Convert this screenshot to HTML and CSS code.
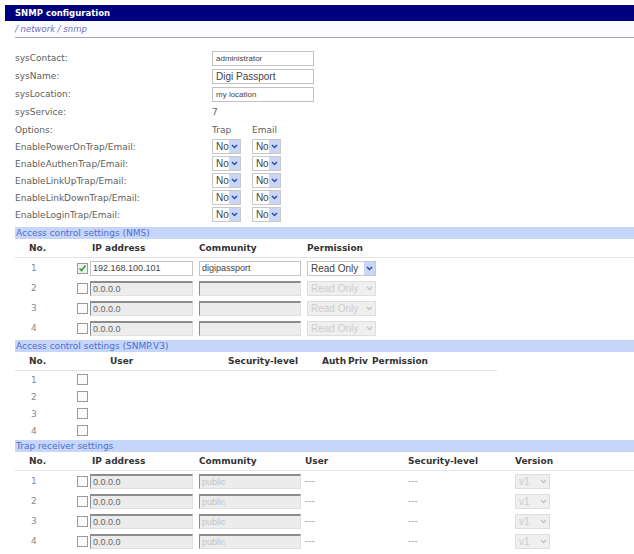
FILE: index.html
```html
<!DOCTYPE html>
<html lang="en">
<head>
  <meta charset="UTF-8" />
  <title>SNMP configuration</title>
  <link rel="stylesheet" href="styles.css">
</head>
<body>
  <div class="titlebar">SNMP configuration</div>
  <div class="crumb">/ network / snmp</div>

  <table class="sys">
    <tr><td class="lbl">sysContact:</td><td><input class="txt" type="text" value="administrator" /></td></tr>
    <tr><td class="lbl">sysName:</td><td><input class="txt big" type="text" value="Digi Passport" /></td></tr>
    <tr><td class="lbl">sysLocation:</td><td><input class="txt" type="text" value="my location" /></td></tr>
    <tr><td class="lbl">sysService:</td><td class="val">7</td></tr>
    <tr class="opt"><td class="lbl">Options:</td><td class="val"><span class="optcol">Trap</span><span class="optcol">Email</span></td></tr>
    <tr class="sw">
      <td class="lbl">EnablePowerOnTrap/Email:</td>
      <td>
        <span class="sel"><select><option>No</option></select><span class="arr"><svg width="7" height="5" viewBox="0 0 7 5"><path d="M1 1l2.5 2.5L6 1" fill="none" stroke="#2b4fb0" stroke-width="1.5"/></svg></span></span>
        <span class="sel"><select><option>No</option></select><span class="arr"><svg width="7" height="5" viewBox="0 0 7 5"><path d="M1 1l2.5 2.5L6 1" fill="none" stroke="#2b4fb0" stroke-width="1.5"/></svg></span></span>
      </td>
    </tr>
    <tr class="sw">
      <td class="lbl">EnableAuthenTrap/Email:</td>
      <td>
        <span class="sel"><select><option>No</option></select><span class="arr"><svg width="7" height="5" viewBox="0 0 7 5"><path d="M1 1l2.5 2.5L6 1" fill="none" stroke="#2b4fb0" stroke-width="1.5"/></svg></span></span>
        <span class="sel"><select><option>No</option></select><span class="arr"><svg width="7" height="5" viewBox="0 0 7 5"><path d="M1 1l2.5 2.5L6 1" fill="none" stroke="#2b4fb0" stroke-width="1.5"/></svg></span></span>
      </td>
    </tr>
    <tr class="sw">
      <td class="lbl">EnableLinkUpTrap/Email:</td>
      <td>
        <span class="sel"><select><option>No</option></select><span class="arr"><svg width="7" height="5" viewBox="0 0 7 5"><path d="M1 1l2.5 2.5L6 1" fill="none" stroke="#2b4fb0" stroke-width="1.5"/></svg></span></span>
        <span class="sel"><select><option>No</option></select><span class="arr"><svg width="7" height="5" viewBox="0 0 7 5"><path d="M1 1l2.5 2.5L6 1" fill="none" stroke="#2b4fb0" stroke-width="1.5"/></svg></span></span>
      </td>
    </tr>
    <tr class="sw">
      <td class="lbl">EnableLinkDownTrap/Email:</td>
      <td>
        <span class="sel"><select><option>No</option></select><span class="arr"><svg width="7" height="5" viewBox="0 0 7 5"><path d="M1 1l2.5 2.5L6 1" fill="none" stroke="#2b4fb0" stroke-width="1.5"/></svg></span></span>
        <span class="sel"><select><option>No</option></select><span class="arr"><svg width="7" height="5" viewBox="0 0 7 5"><path d="M1 1l2.5 2.5L6 1" fill="none" stroke="#2b4fb0" stroke-width="1.5"/></svg></span></span>
      </td>
    </tr>
    <tr class="sw">
      <td class="lbl">EnableLoginTrap/Email:</td>
      <td>
        <span class="sel"><select><option>No</option></select><span class="arr"><svg width="7" height="5" viewBox="0 0 7 5"><path d="M1 1l2.5 2.5L6 1" fill="none" stroke="#2b4fb0" stroke-width="1.5"/></svg></span></span>
        <span class="sel"><select><option>No</option></select><span class="arr"><svg width="7" height="5" viewBox="0 0 7 5"><path d="M1 1l2.5 2.5L6 1" fill="none" stroke="#2b4fb0" stroke-width="1.5"/></svg></span></span>
      </td>
    </tr>
  </table>

  <!-- v1/v2c managers -->
  <div class="section first">Access control settings (NMS)</div>
  <table class="grid nms">
    <colgroup><col class="c-no"><col class="c-cb"><col class="c-ip"><col class="c-com"><col></colgroup>
    <tr class="head"><th class="no">No.</th><th></th><th class="ip">IP address</th><th>Community</th><th>Permission</th></tr>
    <tr>
      <td class="no">1</td>
      <td><span class="cb on"><svg width="9" height="9" viewBox="0 0 9 9"><path d="M1.5 4.5l2 2 4-5" fill="none" stroke="#3c9a3c" stroke-width="1.6"/></svg></span></td>
      <td><input class="cell" type="text" value="192.168.100.101" /></td>
      <td><input class="cell com" type="text" value="digipassport" /></td>
      <td><span class="sel perm"><select><option>Read Only</option></select><span class="arr"><svg width="7" height="5" viewBox="0 0 7 5"><path d="M1 1l2.5 2.5L6 1" fill="none" stroke="#2b4fb0" stroke-width="1.5"/></svg></span></span></td>
    </tr>
    <tr>
      <td class="no">2</td>
      <td><span class="cb"></span></td>
      <td><input class="cell off" type="text" value="0.0.0.0" disabled /></td>
      <td><input class="cell com off" type="text" value="" disabled /></td>
      <td><span class="sel perm dis"><select disabled><option>Read Only</option></select><span class="arr"><svg width="7" height="5" viewBox="0 0 7 5"><path d="M1 1l2.5 2.5L6 1" fill="none" stroke="#c4c4c4" stroke-width="1.5"/></svg></span></span></td>
    </tr>
    <tr>
      <td class="no">3</td>
      <td><span class="cb"></span></td>
      <td><input class="cell off" type="text" value="0.0.0.0" disabled /></td>
      <td><input class="cell com off" type="text" value="" disabled /></td>
      <td><span class="sel perm dis"><select disabled><option>Read Only</option></select><span class="arr"><svg width="7" height="5" viewBox="0 0 7 5"><path d="M1 1l2.5 2.5L6 1" fill="none" stroke="#c4c4c4" stroke-width="1.5"/></svg></span></span></td>
    </tr>
    <tr>
      <td class="no">4</td>
      <td><span class="cb"></span></td>
      <td><input class="cell off" type="text" value="0.0.0.0" disabled /></td>
      <td><input class="cell com off" type="text" value="" disabled /></td>
      <td><span class="sel perm dis"><select disabled><option>Read Only</option></select><span class="arr"><svg width="7" height="5" viewBox="0 0 7 5"><path d="M1 1l2.5 2.5L6 1" fill="none" stroke="#c4c4c4" stroke-width="1.5"/></svg></span></span></td>
    </tr>
  </table>

  <!-- v3 users -->
  <div class="section">Access control settings (SNMP.V3)</div>
  <table class="grid v3">
    <colgroup><col class="c-no"><col class="c-cb"><col class="c-user"><col class="c-sec"><col class="c-auth"><col class="c-priv"><col></colgroup>
    <tr class="head"><th class="no">No.</th><th></th><th class="user">User</th><th>Security-level</th><th>Auth</th><th>Priv</th><th>Permission</th></tr>
    <tr><td class="no">1</td><td><span class="cb"></span></td><td></td><td></td><td></td><td></td><td></td></tr>
    <tr><td class="no">2</td><td><span class="cb"></span></td><td></td><td></td><td></td><td></td><td></td></tr>
    <tr><td class="no">3</td><td><span class="cb"></span></td><td></td><td></td><td></td><td></td><td></td></tr>
    <tr><td class="no">4</td><td><span class="cb"></span></td><td></td><td></td><td></td><td></td><td></td></tr>
  </table>

  <!-- trap receivers -->
  <div class="section last">Trap receiver settings</div>
  <table class="grid trap">
    <colgroup><col class="c-no"><col class="c-cb"><col class="c-ip"><col class="c-com2"><col class="c-tuser"><col class="c-tsec"><col></colgroup>
    <tr class="head"><th class="no">No.</th><th></th><th class="ip">IP address</th><th>Community</th><th>User</th><th>Security-level</th><th>Version</th></tr>
    <tr>
      <td class="no">1</td><td><span class="cb"></span></td>
      <td><input class="cell off" type="text" value="0.0.0.0" disabled /></td>
      <td><input class="cell com off pub" type="text" value="public" disabled /></td>
      <td class="dash">---</td><td class="dash">---</td>
      <td><span class="sel ver dis"><select disabled><option>v1</option></select><span class="arr"><svg width="7" height="5" viewBox="0 0 7 5"><path d="M1 1l2.5 2.5L6 1" fill="none" stroke="#c4c4c4" stroke-width="1.5"/></svg></span></span></td>
    </tr>
    <tr>
      <td class="no">2</td><td><span class="cb"></span></td>
      <td><input class="cell off" type="text" value="0.0.0.0" disabled /></td>
      <td><input class="cell com off pub" type="text" value="public" disabled /></td>
      <td class="dash">---</td><td class="dash">---</td>
      <td><span class="sel ver dis"><select disabled><option>v1</option></select><span class="arr"><svg width="7" height="5" viewBox="0 0 7 5"><path d="M1 1l2.5 2.5L6 1" fill="none" stroke="#c4c4c4" stroke-width="1.5"/></svg></span></span></td>
    </tr>
    <tr>
      <td class="no">3</td><td><span class="cb"></span></td>
      <td><input class="cell off" type="text" value="0.0.0.0" disabled /></td>
      <td><input class="cell com off pub" type="text" value="public" disabled /></td>
      <td class="dash">---</td><td class="dash">---</td>
      <td><span class="sel ver dis"><select disabled><option>v1</option></select><span class="arr"><svg width="7" height="5" viewBox="0 0 7 5"><path d="M1 1l2.5 2.5L6 1" fill="none" stroke="#c4c4c4" stroke-width="1.5"/></svg></span></span></td>
    </tr>
    <tr>
      <td class="no">4</td><td><span class="cb"></span></td>
      <td><input class="cell off" type="text" value="0.0.0.0" disabled /></td>
      <td><input class="cell com off pub" type="text" value="public" disabled /></td>
      <td class="dash">---</td><td class="dash">---</td>
      <td><span class="sel ver dis"><select disabled><option>v1</option></select><span class="arr"><svg width="7" height="5" viewBox="0 0 7 5"><path d="M1 1l2.5 2.5L6 1" fill="none" stroke="#c4c4c4" stroke-width="1.5"/></svg></span></span></td>
    </tr>
  </table>
</body>
</html>
```

FILE: styles.css
```css
body {
  margin: 0;
  font-family: "DejaVu Sans", Verdana, sans-serif;
  font-size: 9px;
  color: #606060;
  background: #fff;
}
.titlebar {
  margin: 5px 0 0 5px;
  height: 16px;
  line-height: 16px;
  padding-left: 10px;
  background: #00007f;
  color: #fff;
  font-weight: bold;
  font-size: 8.5px;
}
.crumb {
  margin-left: 15px;
  height: 16px;
  line-height: 16px;
  color: #7070b8;
  font-style: italic;
  font-size: 8.5px;
  background: #fbfbff;
  border-bottom: 1px solid #a8a8a8;
}

/* system values */
.sys {
  border-collapse: collapse;
  margin: 11px 0 0 15px;
}
.sys td {
  padding: 0;
  height: 18px;
  vertical-align: middle;
}
.sys .lbl {
  width: 197px;
}
.sys .opt td {
  height: 17px;
}
.sys .sw td {
  height: 17px;
}
.optcol {
  display: inline-block;
  width: 40px;
}
.txt {
  box-sizing: border-box;
  width: 102px;
  height: 15px;
  margin: 0;
  padding: 0 3px;
  border: 1px solid #c2c2c2;
  font-family: "Liberation Sans", Arial, sans-serif;
  font-size: 8px;
  color: #444;
}
.txt.big {
  font-size: 10px;
}

/* drop-downs */
.sel {
  display: inline-flex;
  box-sizing: border-box;
  height: 15px;
  width: 29px;
  margin-right: 8px;
  border: 1px solid #c8c8c8;
  vertical-align: middle;
  background: #fff;
}
.sel select {
  appearance: none;
  -webkit-appearance: none;
  flex: 1;
  min-width: 0;
  border: none;
  padding: 0 0 0 3px;
  margin: 0;
  background: transparent;
  font-family: "Liberation Sans", Arial, sans-serif;
  font-size: 10px;
  color: #444;
  height: 13px;
  line-height: 13px;
}
.arr {
  width: 11px;
  background: #c9d6f6;
  display: flex;
  align-items: center;
  justify-content: center;
}
.sel.perm {
  width: 69px;
  margin: 0;
}
.sel.ver {
  width: 35px;
  margin: 0;
}
.sel.dis {
  background: #efefef;
  border-color: #dedede;
}
.sel.dis select {
  color: #c0c0c0;
}
.sel.dis .arr {
  background: #efefef;
}

/* section bars */
.section {
  margin: 2px 0 0 15px;
  height: 12px;
  line-height: 12px;
  padding-left: 1px;
  background: #c6d5fa;
  color: #4d6fcf;
}
.section.first {
  margin-top: 4px;
}
.section.last {
  margin-top: 1px;
}

.grid {
  border-collapse: collapse;
  table-layout: fixed;
  margin-left: 15px;
  width: 619px;
}
.grid th {
  text-align: left;
  font-weight: bold;
  color: #333;
  padding: 0;
  height: 18px;
  border-bottom: 1px solid #e2e2e2;
}
.grid td {
  padding: 0;
  height: 20px;
  vertical-align: middle;
}
.grid th.no {
  padding-left: 14px;
}
.grid td.no {
  padding-left: 16px;
  color: #8a8a8a;
}
.grid th.ip {
  padding-left: 2px;
}
.c-no { width: 60px; }
.c-cb { width: 15px; }
.c-ip { width: 109px; }
.c-com { width: 108px; }
.c-com2 { width: 106px; }
.c-tuser { width: 103px; }
.c-tsec { width: 107px; }

.v3 {
  width: 482px;
}
.v3 td {
  height: 17px;
}
.v3 th.user {
  padding-left: 20px;
}
.c-user { width: 138px; }
.c-sec { width: 94px; }
.c-auth { width: 26px; }
.c-priv { width: 24px; }

.cb {
  display: inline-block;
  box-sizing: border-box;
  width: 11px;
  height: 11px;
  margin-left: 2px;
  border: 1px solid #9a9a9a;
  background: #fbfbfb;
  vertical-align: middle;
}
.cb svg {
  display: block;
}
.cb.on {
  background: #eef2ee;
}

.cell {
  box-sizing: border-box;
  width: 103px;
  height: 15px;
  margin: 0;
  padding: 0 2px;
  border: 1px solid #c4c4c4;
  background: #fff;
  font-family: "Liberation Sans", Arial, sans-serif;
  font-size: 9px;
  color: #444;
  vertical-align: middle;
}
.cell.com {
  width: 102px;
}
.cell.off {
  background: #ececec;
  border-top: 2px solid #8c8c8c;
  border-left: 1px solid #8c8c8c;
  border-right: 1px solid #e0e0e0;
  border-bottom: 1px solid #e0e0e0;
  color: #666;
}
.cell.pub {
  color: #c4c4c4;
}
.dash {
  color: #999;
}
```
